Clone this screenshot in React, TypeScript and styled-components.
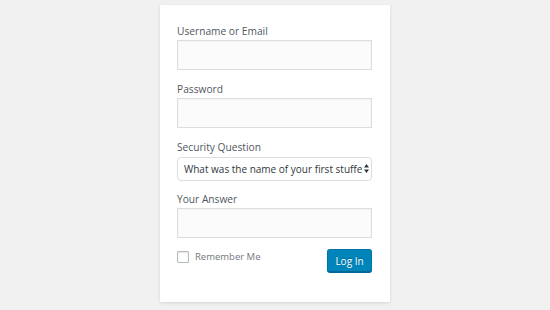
import React from "react";
import styled, { createGlobalStyle } from "styled-components";

const Global = createGlobalStyle`
  html, body { margin: 0; padding: 0; }
  body {
    background: #f1f1f1;
    font-family: "Open Sans", "Noto Sans", sans-serif;
    width: 550px;
    height: 310px;
    overflow: hidden;
  }
`;

const Page = styled.div`
  display: flex;
  justify-content: center;
  padding-top: 5px;
`;

const Card = styled.form`
  width: 230px;
  height: 297px;
  box-sizing: border-box;
  background: #fff;
  box-shadow: 0 1px 3px rgba(0, 0, 0, 0.13);
  padding: 18px 18px 0 17px;
  display: flex;
  flex-direction: column;
`;

const Field = styled.div`
  display: flex;
  flex-direction: column;
  margin-bottom: 11px;
`;

const Label = styled.label`
  font-size: 10.2px;
  line-height: 16px;
  color: #50575e;
  margin-bottom: 1px;
`;

const Input = styled.input`
  box-sizing: border-box;
  width: 195px;
  height: 30px;
  background: #fbfbfb;
  border: 1px solid #dddddd;
  box-shadow: inset 0 1px 2px rgba(0, 0, 0, 0.04);
  margin: 0;
  outline: none;
`;

const SelectWrap = styled.div`
  position: relative;
  width: 195px;
  height: 24px;
`;

const Select = styled.select`
  appearance: none;
  -webkit-appearance: none;
  box-sizing: border-box;
  width: 100%;
  height: 24px;
  margin: 0;
  padding: 0 9px 0 6px;
  border: 1px solid #dddddd;
  border-radius: 4px;
  background: #fff;
  color: #32373c;
  font-family: "Open Sans", "Noto Sans", sans-serif;
  font-size: 10px;
  outline: none;
`;

const Arrow = styled.svg`
  position: absolute;
  right: 3px;
  top: 8px;
  width: 5px;
  height: 9px;
  pointer-events: none;
`;

const Row = styled.div`
  display: flex;
  justify-content: space-between;
  align-items: flex-start;
`;

const Remember = styled.label`
  display: flex;
  align-items: center;
  gap: 6px;
  margin-top: 2px;
  font-size: 9.5px;
  line-height: 12px;
  color: #72777c;
`;

const Check = styled.span`
  box-sizing: border-box;
  width: 12px;
  height: 12px;
  border: 1px solid #b4b9be;
  border-radius: 1px;
  background: #fff;
  box-shadow: inset 0 1px 2px rgba(0, 0, 0, 0.1);
`;

const Button = styled.button`
  box-sizing: border-box;
  width: 45px;
  height: 23px;
  margin: 0;
  padding: 0;
  background: #0085ba;
  border: 1px solid #0073aa;
  border-bottom-color: #006799;
  border-radius: 3px;
  box-shadow: 0 1px 0 #006799;
  color: #fff;
  font-family: "Open Sans", "Noto Sans", sans-serif;
  font-size: 10px;
  text-shadow: 0 -1px 1px #006799;
`;

export default function App() {
  return (
    <>
      <Global />
      <Page>
        <Card onSubmit={(e) => e.preventDefault()}>
          <Field>
            <Label>Username or Email</Label>
            <Input type="text" />
          </Field>
          <Field>
            <Label>Password</Label>
            <Input type="password" />
          </Field>
          <Field>
            <Label>Security Question</Label>
            <SelectWrap>
              <Select defaultValue="q1">
                <option value="q1">What was the name of your first stuffed animal?</option>
              </Select>
              <Arrow viewBox="0 0 5 9">
                <path d="M2.5 0 L5 3.4 H0 Z M2.5 9 L5 5.6 H0 Z" fill="#32373c" />
              </Arrow>
            </SelectWrap>
          </Field>
          <Field>
            <Label>Your Answer</Label>
            <Input type="text" />
          </Field>
          <Row>
            <Remember>
              <Check />
              Remember Me
            </Remember>
            <Button type="submit">Log In</Button>
          </Row>
        </Card>
      </Page>
    </>
  );
}
